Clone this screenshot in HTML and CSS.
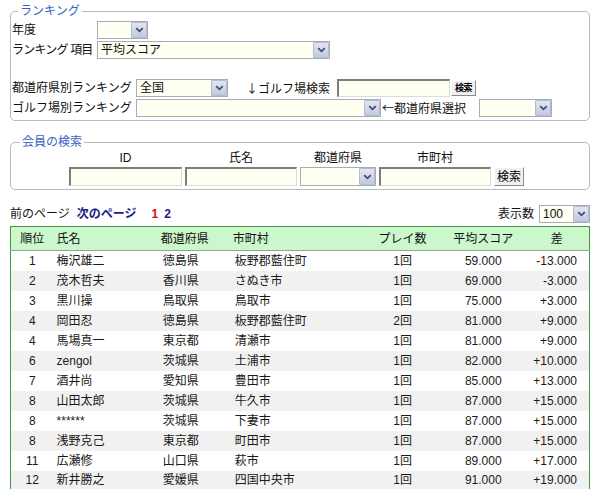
FILE: index.html
```html
<!DOCTYPE html>
<html lang="ja">
<head>
<meta charset="utf-8">
<title>ランキング</title>
<link rel="stylesheet" href="styles.css">
</head>
<body>
<fieldset class="box box-rank">
  <legend>ランキング</legend>
  <div class="row">
    <span class="lbl lbl-s">年度</span>
    <span class="sel w51"><span class="val"></span><span class="arr"><svg width="9" height="6" viewBox="0 0 9 6"><path d="M1.2 1.2 L4.5 4.3 L7.8 1.2" fill="none" stroke="#3d4f78" stroke-width="1.8"/></svg></span></span>
  </div>
  <div class="row">
    <span class="lbl lbl-s lbl-tight">ランキング 項目</span>
    <span class="sel w233"><span class="val">平均スコア</span><span class="arr"><svg width="9" height="6" viewBox="0 0 9 6"><path d="M1.2 1.2 L4.5 4.3 L7.8 1.2" fill="none" stroke="#3d4f78" stroke-width="1.8"/></svg></span></span>
  </div>
  <div class="row row-gap">
    <span class="lbl lbl-l">都道府県別ランキング</span>
    <span class="sel w92"><span class="val">全国</span><span class="arr"><svg width="9" height="6" viewBox="0 0 9 6"><path d="M1.2 1.2 L4.5 4.3 L7.8 1.2" fill="none" stroke="#3d4f78" stroke-width="1.8"/></svg></span></span>
    <span class="txt txt-golf"><span class="arrow-ch">↓</span>ゴルフ場検索</span>
    <span class="inp w113"></span>
    <span class="btn btn-mini">検索</span>
  </div>
  <div class="row">
    <span class="lbl lbl-l">ゴルフ場別ランキング</span>
    <span class="sel w245"><span class="val"></span><span class="arr"><svg width="9" height="6" viewBox="0 0 9 6"><path d="M1.2 1.2 L4.5 4.3 L7.8 1.2" fill="none" stroke="#3d4f78" stroke-width="1.8"/></svg></span></span>
    <span class="txt txt-pref"><span class="arrow-ch">←</span>都道府県選択</span>
    <span class="sel w73"><span class="val"></span><span class="arr"><svg width="9" height="6" viewBox="0 0 9 6"><path d="M1.2 1.2 L4.5 4.3 L7.8 1.2" fill="none" stroke="#3d4f78" stroke-width="1.8"/></svg></span></span>
  </div>
</fieldset>

<fieldset class="box box-member">
  <legend>会員の検索</legend>
  <div class="mgrid">
    <span class="mlbl">ID</span>
    <span class="mlbl">氏名</span>
    <span class="mlbl">都道府県</span>
    <span class="mlbl">市町村</span>
    <span></span>
    <span class="inp inp-m"></span>
    <span class="inp inp-m"></span>
    <span class="sel sel-m"><span class="val"></span><span class="arr"><svg width="9" height="6" viewBox="0 0 9 6"><path d="M1.2 1.2 L4.5 4.3 L7.8 1.2" fill="none" stroke="#3d4f78" stroke-width="1.8"/></svg></span></span>
    <span class="inp inp-m"></span>
    <span class="btn btn-m">検索</span>
  </div>
</fieldset>

<div class="pager">
  <span class="prev">前のページ</span>
  <span class="next">次のページ</span>
  <span class="pg cur">1</span>
  <span class="pg">2</span>
  <span class="spacer"></span>
  <span class="cnt">表示数</span>
  <span class="sel w51"><span class="val">100</span><span class="arr"><svg width="9" height="6" viewBox="0 0 9 6"><path d="M1.2 1.2 L4.5 4.3 L7.8 1.2" fill="none" stroke="#3d4f78" stroke-width="1.8"/></svg></span></span>
</div>

<table class="rank">
  <colgroup>
    <col class="c1"><col class="c2"><col class="c3"><col class="c4"><col class="c5"><col class="c6"><col class="c7">
  </colgroup>
  <thead>
    <tr><th>順位</th><th class="l">氏名</th><th class="l">都道府県</th><th class="l">市町村</th><th>プレイ数</th><th>平均スコア</th><th class="hd-diff">差</th></tr>
  </thead>
  <tbody>
    <tr><td class="c">1</td><td class="nm">梅沢雄二</td><td class="pf">徳島県</td><td class="ct">板野郡藍住町</td><td class="c">1回</td><td class="c">59.000</td><td class="r">-13.000</td></tr>
    <tr><td class="c">2</td><td class="nm">茂木哲夫</td><td class="pf">香川県</td><td class="ct">さぬき市</td><td class="c">1回</td><td class="c">69.000</td><td class="r">-3.000</td></tr>
    <tr><td class="c">3</td><td class="nm">黒川操</td><td class="pf">鳥取県</td><td class="ct">鳥取市</td><td class="c">1回</td><td class="c">75.000</td><td class="r">+3.000</td></tr>
    <tr><td class="c">4</td><td class="nm">岡田忍</td><td class="pf">徳島県</td><td class="ct">板野郡藍住町</td><td class="c">2回</td><td class="c">81.000</td><td class="r">+9.000</td></tr>
    <tr><td class="c">4</td><td class="nm">馬場真一</td><td class="pf">東京都</td><td class="ct">清瀬市</td><td class="c">1回</td><td class="c">81.000</td><td class="r">+9.000</td></tr>
    <tr><td class="c">6</td><td class="nm">zengol</td><td class="pf">茨城県</td><td class="ct">土浦市</td><td class="c">1回</td><td class="c">82.000</td><td class="r">+10.000</td></tr>
    <tr><td class="c">7</td><td class="nm">酒井尚</td><td class="pf">愛知県</td><td class="ct">豊田市</td><td class="c">1回</td><td class="c">85.000</td><td class="r">+13.000</td></tr>
    <tr><td class="c">8</td><td class="nm">山田太郎</td><td class="pf">茨城県</td><td class="ct">牛久市</td><td class="c">1回</td><td class="c">87.000</td><td class="r">+15.000</td></tr>
    <tr><td class="c">8</td><td class="nm">******</td><td class="pf">茨城県</td><td class="ct">下妻市</td><td class="c">1回</td><td class="c">87.000</td><td class="r">+15.000</td></tr>
    <tr><td class="c">8</td><td class="nm">浅野克己</td><td class="pf">東京都</td><td class="ct">町田市</td><td class="c">1回</td><td class="c">87.000</td><td class="r">+15.000</td></tr>
    <tr><td class="c">11</td><td class="nm">広瀬修</td><td class="pf">山口県</td><td class="ct">萩市</td><td class="c">1回</td><td class="c">89.000</td><td class="r">+17.000</td></tr>
    <tr><td class="c">12</td><td class="nm">新井勝之</td><td class="pf">愛媛県</td><td class="ct">四国中央市</td><td class="c">1回</td><td class="c">91.000</td><td class="r">+19.000</td></tr>
  </tbody>
</table>
</body>
</html>
```

FILE: styles.css
```css
* { box-sizing: border-box; }

html, body { background: #fff; }

body {
  margin: 0;
  padding: 4px 10px 0 10px;
  font-family: "Liberation Sans", "Noto Sans CJK JP", sans-serif;
  font-size: 12px;
  line-height: 14px;
  color: #111;
  overflow: hidden;
}

/* ---------- fieldsets ---------- */
.box {
  margin: 0;
  width: 580px;
  min-width: 0;
  border: 1px solid #b9b9b9;
  border-radius: 5px;
}

.box legend {
  color: #3a62c4;
  padding: 0 2px;
  line-height: 14px;
  font-size: 12px;
}

.box-rank {
  padding: 3px 0 3px 1px;
}
.box-rank legend { margin-left: 6px; }

.box-member {
  margin-top: 14px;
  padding: 1px 0 3px 1px;
}
.box-member legend { margin-left: 8px; }

.row {
  display: flex;
  align-items: center;
  height: 18px;
}
.row + .row { margin-top: 2px; }
.row.row-gap { margin-top: 20px; }

.lbl { flex: none; white-space: nowrap; }
.lbl-s { width: 85px; }
.lbl-l { width: 124px; }
.lbl-tight { letter-spacing: -0.8px; }

.txt { flex: none; white-space: nowrap; }
.txt-golf { margin-left: 18px; width: 91px; }
.txt-pref { margin-left: 1px; width: 97px; }
.arrow-ch { font-family: "Noto Sans CJK JP", sans-serif; }

/* ---------- fake controls ---------- */
.sel {
  flex: none;
  display: inline-flex;
  align-items: stretch;
  height: 18px;
  border: 1px solid #a7adb6;
  background: #fffff2;
}
.sel .val {
  flex: 1;
  padding-left: 3px;
  line-height: 16px;
  white-space: nowrap;
  overflow: hidden;
}
.sel .arr {
  flex: none;
  width: 16px;
  display: flex;
  align-items: center;
  justify-content: center;
  background: linear-gradient(#e3e6f1, #c3c9de);
  border: 1px solid #b3bad3;
  border-radius: 1px;
}

.w51 { width: 51px; }
.w73 { width: 73px; }
.w92 { width: 92px; }
.w233 { width: 233px; }
.w245 { width: 245px; }
.w113 { width: 113px; }

.inp {
  flex: none;
  display: inline-block;
  height: 18px;
  background: #fffff2;
  border-style: solid;
  border-width: 2px 1px 1px 2px;
  border-color: #7d7d7d #dcdcdc #dcdcdc #7d7d7d;
}

.btn {
  flex: none;
  display: inline-flex;
  align-items: center;
  justify-content: center;
  background: #f1f1f1;
  border: 1px solid;
  border-color: #ffffff #8a8a8a #8a8a8a #ffffff;
  color: #000;
  white-space: nowrap;
}
.btn-mini {
  margin-left: 1px;
  width: 25px;
  height: 16px;
  font-size: 9px;
  font-weight: bold;
  letter-spacing: -0.5px;
}

/* ---------- member search ---------- */
.mgrid {
  display: grid;
  grid-template-columns: 113px 112px 76px 112px 30px;
  grid-template-rows: 16px 19px;
  column-gap: 3px;
  row-gap: 1px;
  padding-left: 57px;
}
.mlbl {
  text-align: center;
  line-height: 16px;
  color: #111;
}
.inp-m { height: 19px; width: 100%; }
.sel-m { height: 19px; width: 100%; }
.btn-m { height: 19px; width: 30px; font-size: 12px; }

/* ---------- pager ---------- */
.pager {
  display: flex;
  align-items: center;
  height: 18px;
  margin-top: 15px;
  width: 580px;
}
.pager .prev { margin-right: 7px; }
.pager .next { color: #1c1c8a; font-weight: bold; margin-right: 15px; }
.pager .pg { color: #1c1c8a; font-weight: bold; margin-right: 6px; }
.pager .pg.cur { color: #cc1111; }
.pager .spacer { flex: 1; }
.pager .cnt { margin-right: 5px; }
.pager .sel { height: 18px; }

/* ---------- ranking table ---------- */
.rank {
  margin-top: 3px;
  width: 580px;
  border-collapse: collapse;
  table-layout: fixed;
  border: 1px solid #3f9a3f;
}
.rank .c1 { width: 43px; }
.rank .c2 { width: 104px; }
.rank .c3 { width: 72px; }
.rank .c4 { width: 125px; }
.rank .c5 { width: 95px; }
.rank .c6 { width: 66px; }
.rank .c7 { width: 73px; }

.rank thead th {
  height: 24px;
  background: #ccf6cc;
  font-weight: normal;
  text-align: center;
  border-bottom: 1px solid #8fa88f;
  padding: 0;
  white-space: nowrap;
  color: #111;
}
.rank thead th.l { text-align: left; padding-left: 3px; }
.rank thead th.hd-diff { padding-left: 8px; }

.rank tbody td {
  height: 20px;
  padding: 0;
  white-space: nowrap;
  color: #1a1a1a;
}
.rank tbody tr:nth-child(even) td { background: #f1f1f1; }
.rank td.c { text-align: center; }
.rank td.r { text-align: right; padding-right: 12px; }
.rank td.nm { padding-left: 3px; }
.rank td.pf { padding-left: 5px; }
.rank td.ct { padding-left: 5px; }
```
